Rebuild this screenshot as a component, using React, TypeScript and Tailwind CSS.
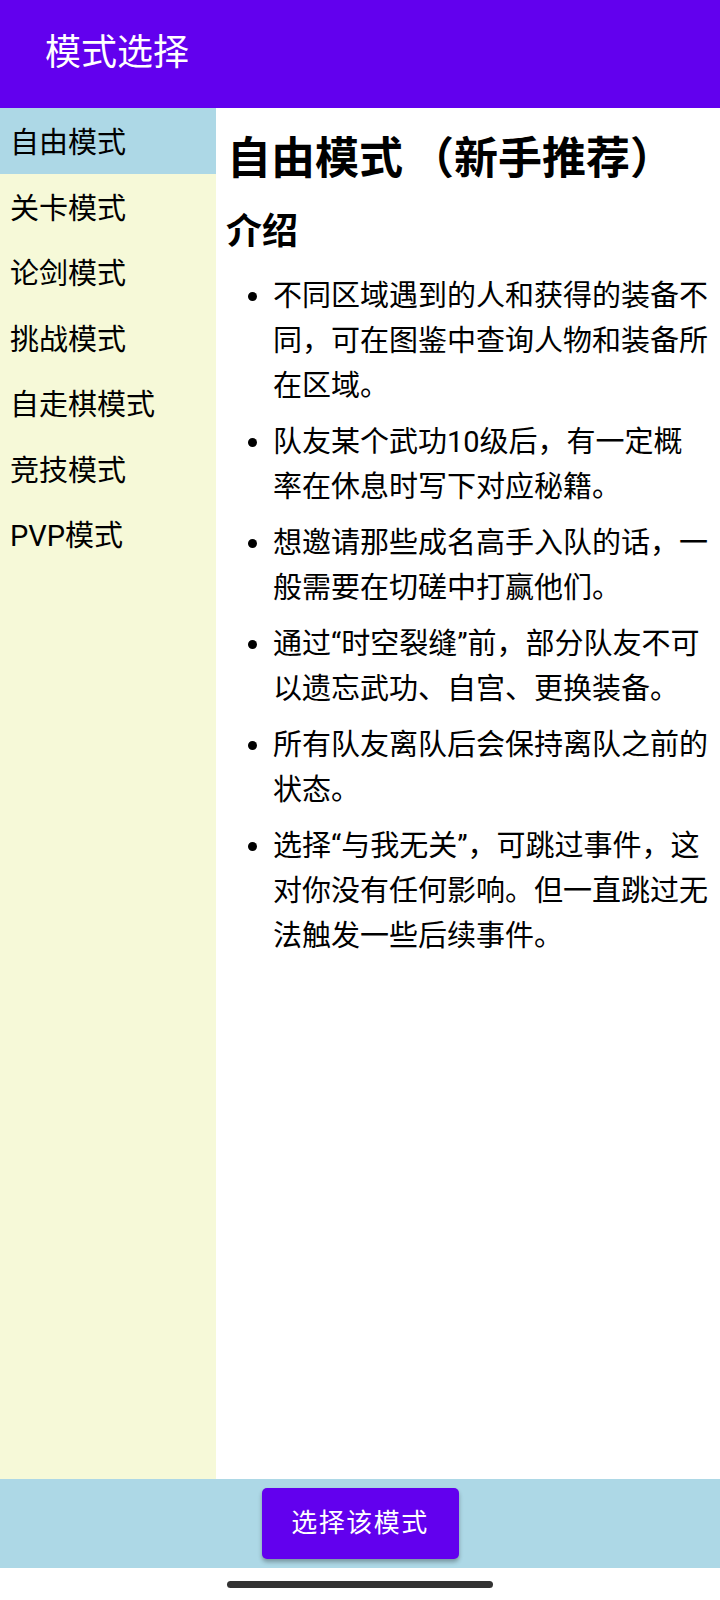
import { useState } from "react";

const modes = ["自由模式", "关卡模式", "论剑模式", "挑战模式", "自走棋模式", "竞技模式", "PVP模式"];

const tips = [
  "不同区域遇到的人和获得的装备不同，可在图鉴中查询人物和装备所在区域。",
  "队友某个武功10级后，有一定概率在休息时写下对应秘籍。",
  "想邀请那些成名高手入队的话，一般需要在切磋中打赢他们。",
  "通过“时空裂缝”前，部分队友不可以遗忘武功、自宫、更换装备。",
  "所有队友离队后会保持离队之前的状态。",
  "选择“与我无关”，可跳过事件，这对你没有任何影响。但一直跳过无法触发一些后续事件。",
];

export default function App() {
  const [selected, setSelected] = useState(0);

  return (
    <div
      className="flex h-[1600px] w-[720px] flex-col bg-white text-black"
      style={{ fontFamily: "Roboto, 'Noto Sans CJK SC', sans-serif" }}
    >
      {/* app bar */}
      <div className="flex h-[108px] shrink-0 items-center bg-[#6200ee] pb-[2px] pl-[45px]">
        <span className="text-[36px] leading-none text-white">模式选择</span>
      </div>

      <div className="flex min-h-0 flex-1">
        {/* mode list */}
        <div className="flex w-[216px] shrink-0 flex-col bg-[#f6f9d8]">
          {modes.map((m, i) => (
            <button
              key={m}
              onClick={() => setSelected(i)}
              className={
                "flex h-[65.5px] items-center pl-[10px] pt-[6px] text-left text-[29px] leading-none " +
                (i === selected ? "bg-[#add8e6]" : "")
              }
            >
              {m}
            </button>
          ))}
        </div>

        {/* detail */}
        <div className="flex-1 px-[10px] pt-[25px]">
          <h1 className="pl-[1px] text-[44px] font-bold leading-[52px]">
            自由模式<span className="ml-[7px]">（新手推荐）</span>
          </h1>
          <h2 className="mt-[26px] text-[36px] font-bold leading-[43px]">介绍</h2>
          <ul className="mt-[20px] list-disc pl-[47px] text-[29px] leading-[45px]">
            {tips.map((t) => (
              <li key={t} className="mb-[11px] w-[437px]">
                {t}
              </li>
            ))}
          </ul>
        </div>
      </div>

      {/* bottom action */}
      <div className="flex h-[89px] shrink-0 items-center justify-center bg-[#add8e6]">
        <button className="flex h-[71px] w-[197px] items-center justify-center rounded-[5px] bg-[#6200ee] text-[26px] tracking-[1.5px] text-white shadow-[0_3px_4px_rgba(0,0,0,0.3)]">
          选择该模式
        </button>
      </div>

      <div className="flex h-[32px] shrink-0 justify-center pt-[13px]">
        <div className="h-[7px] w-[266px] rounded-full bg-[#333333]" />
      </div>
    </div>
  );
}
